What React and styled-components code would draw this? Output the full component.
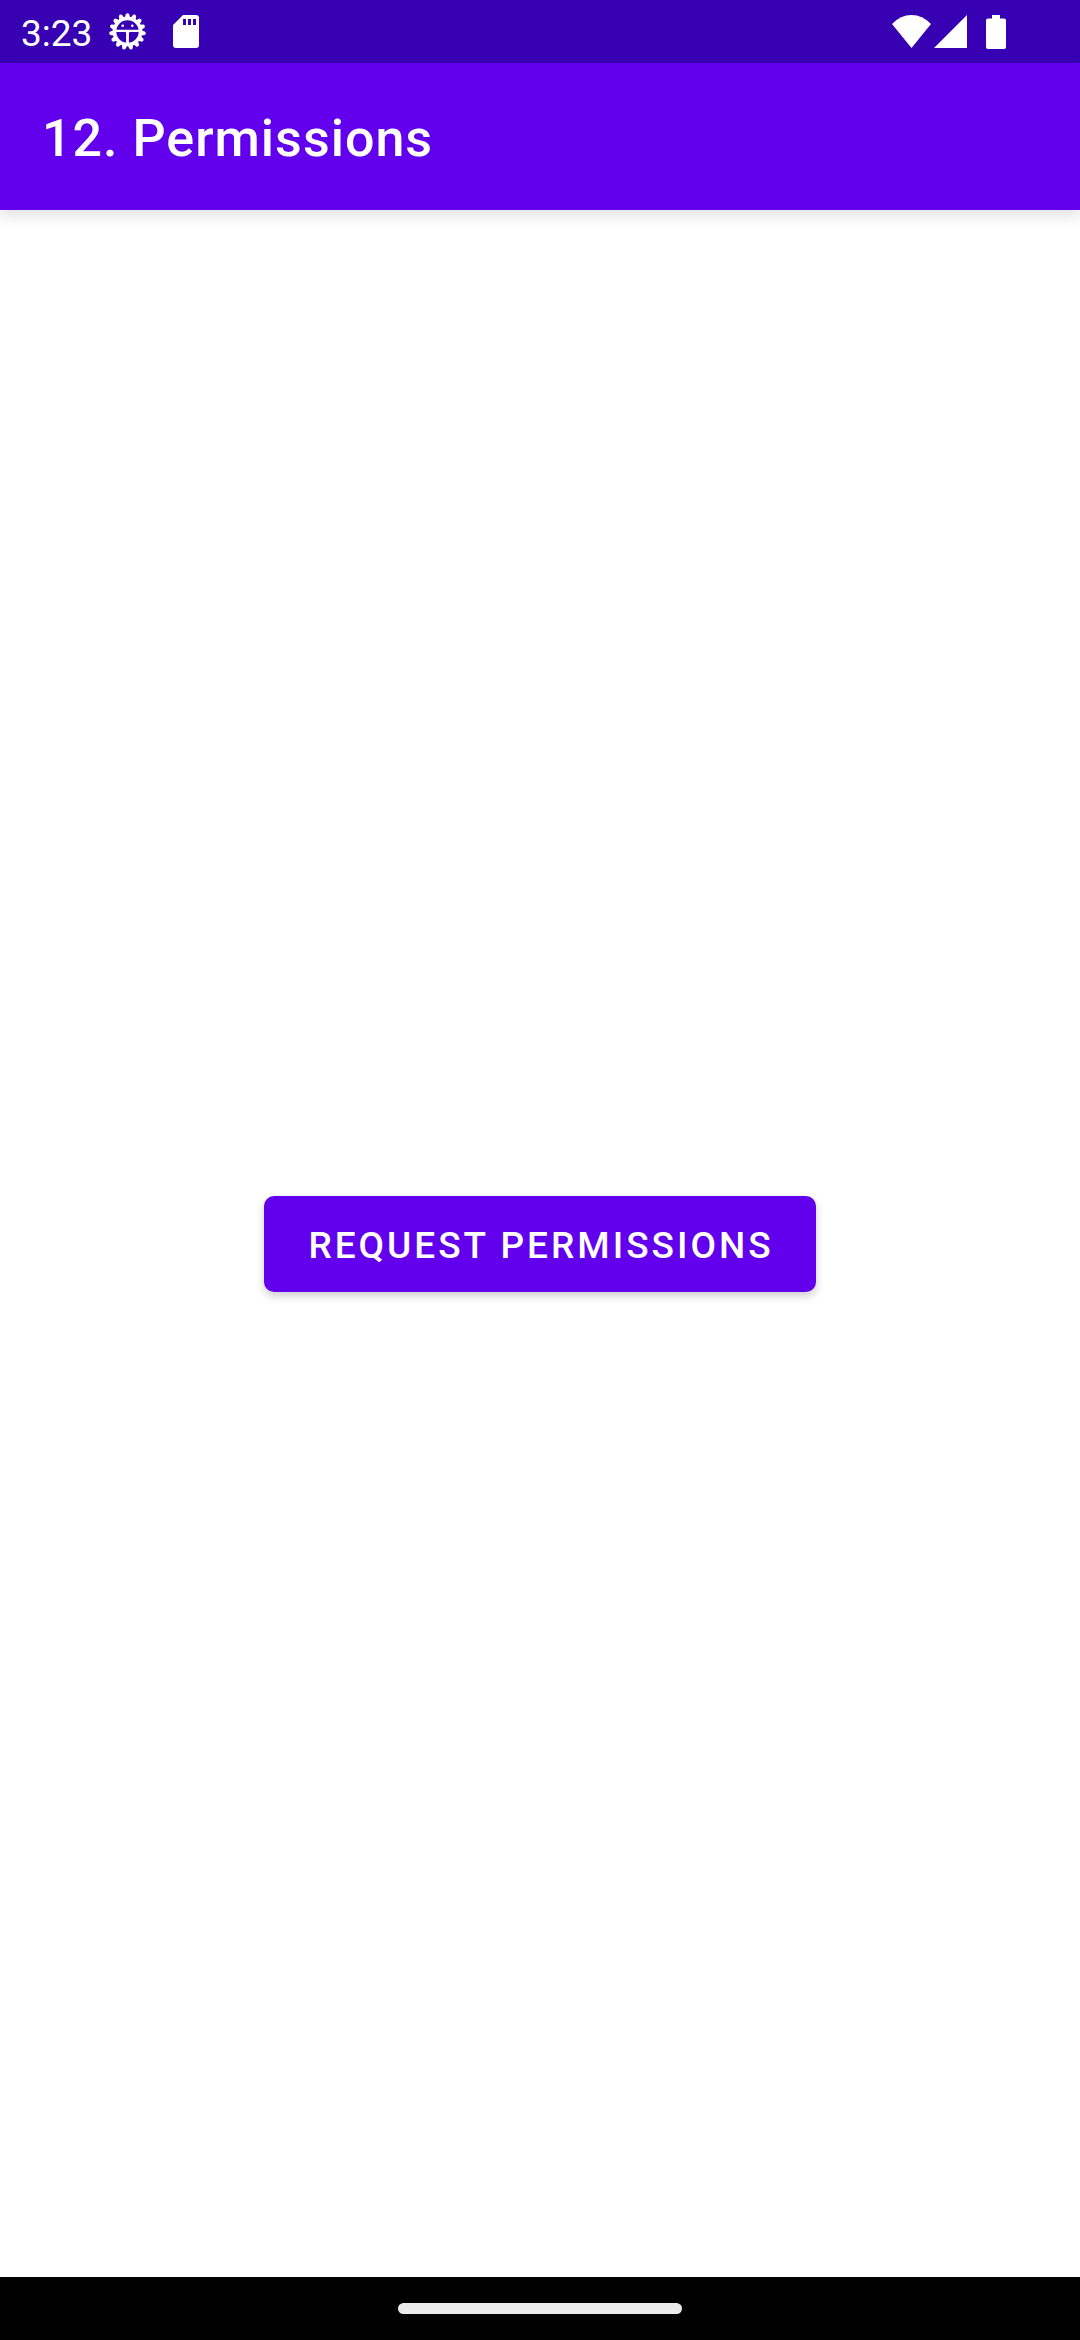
import React from "react";
import styled, { createGlobalStyle } from "styled-components";

const GlobalStyle = createGlobalStyle`
  *, *::before, *::after {
    box-sizing: border-box;
  }
  body {
    margin: 0;
    background: #ffffff;
    font-family: Roboto, "Noto Sans", sans-serif;
  }
`;

const Screen = styled.div`
  display: flex;
  flex-direction: column;
  min-height: 100vh;
  background: #ffffff;
`;

const StatusBar = styled.div`
  display: flex;
  align-items: center;
  justify-content: space-between;
  height: 63px;
  padding: 0 74px 0 21px;
  background: #3700b3;
  color: #ffffff;
`;

const StatusGroup = styled.div`
  display: flex;
  align-items: center;
  gap: ${({ $gap }) => $gap}px;
`;

const Clock = styled.time`
  padding-top: 4px;
  margin-right: -10px;
  font-size: 37px;
  line-height: 44px;
`;

const Icon = styled.svg`
  display: block;
  flex: none;
  fill: #ffffff;
`;

const BatterySlot = styled.span`
  padding-left: 16px;
`;

const AppBar = styled.header`
  display: flex;
  align-items: center;
  height: 147px;
  padding: 0 42px;
  background: #6200ee;
  box-shadow: 0 6px 14px rgba(0, 0, 0, 0.12);
`;

const Title = styled.h1`
  margin: 0;
  padding-top: 4px;
  color: #ffffff;
  font-size: 52px;
  font-weight: 500;
  line-height: 64px;
  letter-spacing: 1px;
`;

const Content = styled.main`
  display: flex;
  flex: 1;
  align-items: center;
  justify-content: center;
`;

const Button = styled.button`
  height: 96px;
  padding: 4px 42px 0 44px;
  border: 0;
  border-radius: 10px;
  background: #6200ee;
  box-shadow: 0 4px 8px rgba(0, 0, 0, 0.2);
  color: #ffffff;
  font-family: inherit;
  font-size: 37px;
  font-weight: 500;
  line-height: 44px;
  letter-spacing: 3px;
  text-transform: uppercase;
  cursor: pointer;
`;

const NavigationBar = styled.footer`
  display: flex;
  align-items: center;
  justify-content: center;
  height: 63px;
  background: #000000;
`;

const HomeHandle = styled.span`
  width: 284px;
  height: 11px;
  border-radius: 6px;
  background: #ebebeb;
`;

const TEETH = Array.from({ length: 15 }, (_, i) => i * 24 + 12);

function GearIcon() {
  return (
    <Icon width="37" height="37" viewBox="-18.5 -18.5 37 37" aria-hidden="true">
      {TEETH.map((angle) => (
        <path key={angle} d="M-3 13 L-1.6 17.6 Q0 19 1.6 17.6 L3 13Z" transform={`rotate(${angle})`} />
      ))}
      <circle r="13" fill="none" stroke="#ffffff" strokeWidth="3.6" />
      <path d="M-12 -1.8H12V0.4H2.2Q1.4 0.6 1.4 2V12H-1.4V2Q-1.4 0.6 -2.2 0.4H-12Z" />
      <circle cx="-4.8" cy="-5.8" r="1.3" />
      <circle cx="4.8" cy="-5.8" r="1.3" />
    </Icon>
  );
}

function SdCardIcon() {
  return (
    <Icon width="26" height="33" viewBox="0 0 26 33" aria-hidden="true">
      <path
        fillRule="evenodd"
        d="M10 0H23Q26 0 26 3V30Q26 33 23 33H3Q0 33 0 30V10ZM10 4V10H13V4ZM15 4V10H18V4ZM20 4V10H23V4Z"
      />
    </Icon>
  );
}

function WifiIcon() {
  return (
    <Icon width="39" height="33" viewBox="0 0 39 33" aria-hidden="true">
      <path d="M19.5 33L0 9Q8.5 0 19.5 0T39 9Z" />
    </Icon>
  );
}

function SignalIcon() {
  return (
    <Icon width="33" height="33" viewBox="0 0 33 33" aria-hidden="true">
      <path d="M0 33L33 0V33Z" />
    </Icon>
  );
}

function BatteryIcon() {
  return (
    <Icon width="20" height="34" viewBox="0 0 20 34" aria-hidden="true">
      <path d="M6 0H14V3.5H18Q20 3.5 20 5.5V32Q20 34 18 34H2Q0 34 0 32V5.5Q0 3.5 2 3.5H6Z" />
    </Icon>
  );
}

export default function App() {
  return (
    <>
      <GlobalStyle />
      <Screen>
        <StatusBar>
          <StatusGroup $gap={27}>
            <Clock>3:23</Clock>
            <GearIcon />
            <SdCardIcon />
          </StatusGroup>
          <StatusGroup $gap={3}>
            <WifiIcon />
            <SignalIcon />
            <BatterySlot>
              <BatteryIcon />
            </BatterySlot>
          </StatusGroup>
        </StatusBar>
        <AppBar>
          <Title>12. Permissions</Title>
        </AppBar>
        <Content>
          <Button type="button">Request permissions</Button>
        </Content>
        <NavigationBar>
          <HomeHandle />
        </NavigationBar>
      </Screen>
    </>
  );
}
